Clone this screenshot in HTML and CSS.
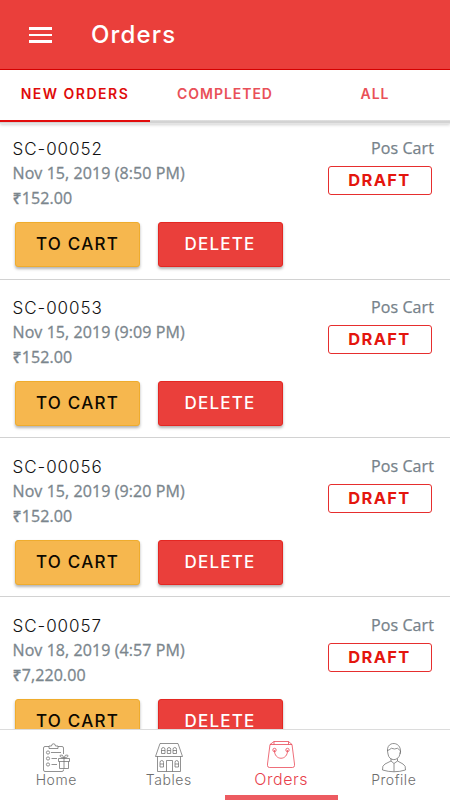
FILE: index.html
```html
<!DOCTYPE html>
<html lang="en">
<head>
<meta charset="utf-8">
<title>Orders</title>
<link rel="stylesheet" href="styles.css">
</head>
<body>
<div class="app">
  <header class="header">
    <div class="menu"><i></i><i></i><i></i></div>
    <h1 class="title">Orders</h1>
  </header>
  <nav class="tabs">
    <div class="tab active"><span>NEW ORDERS</span></div>
    <div class="tab"><span>COMPLETED</span></div>
    <div class="tab"><span>ALL</span></div>
  </nav>
  <main class="list">
    <article class="order">
      <div class="info">
        <div class="left"><div class="code">SC-00052</div><div class="meta">Nov 15, 2019 (8:50 PM)</div><div class="meta">₹152.00</div></div>
        <div class="right"><div class="source">Pos Cart</div><div class="badge">DRAFT</div></div>
      </div>
      <div class="actions"><button class="btn cart">TO CART</button><button class="btn delete">DELETE</button></div>
    </article>
    <article class="order">
      <div class="info">
        <div class="left"><div class="code">SC-00053</div><div class="meta">Nov 15, 2019 (9:09 PM)</div><div class="meta">₹152.00</div></div>
        <div class="right"><div class="source">Pos Cart</div><div class="badge">DRAFT</div></div>
      </div>
      <div class="actions"><button class="btn cart">TO CART</button><button class="btn delete">DELETE</button></div>
    </article>
    <article class="order">
      <div class="info">
        <div class="left"><div class="code">SC-00056</div><div class="meta">Nov 15, 2019 (9:20 PM)</div><div class="meta">₹152.00</div></div>
        <div class="right"><div class="source">Pos Cart</div><div class="badge">DRAFT</div></div>
      </div>
      <div class="actions"><button class="btn cart">TO CART</button><button class="btn delete">DELETE</button></div>
    </article>
    <article class="order">
      <div class="info">
        <div class="left"><div class="code">SC-00057</div><div class="meta">Nov 18, 2019 (4:57 PM)</div><div class="meta">₹7,220.00</div></div>
        <div class="right"><div class="source">Pos Cart</div><div class="badge">DRAFT</div></div>
      </div>
      <div class="actions"><button class="btn cart">TO CART</button><button class="btn delete">DELETE</button></div>
    </article>
  </main>
  <footer class="bottom">
    <div class="item">
      <svg width="28" height="30" viewBox="0 0 28 30"><path d="M7 3.500H3Q1.500 3.500 1.500 5V27Q1.500 28.500 3 28.500H20Q21.500 28.500 21.500 27V26.500M16 3.500H20Q21.500 3.500 21.500 5V11M7 5.500V3H9.500Q9.500.8 11.500.8T13.500 3H16V5.500ZM9 9.500H19M9.500 15.500H15M9.500 21.500H15M16.500 15.500H27.500V18.500H16.500ZM17.500 18.500V25.500H26.500V18.500M22 15.500V25.500M22 15Q16.500 14 18.500 12Q20.500 11 22 15Q23 11 25.500 12Q27.500 14 22 15"/><circle cx="6" cy="9.500" r="1.600"/><circle cx="6" cy="15.500" r="1.600"/><circle cx="6" cy="21.500" r="1.600"/></svg>
      <span>Home</span>
    </div>
    <div class="item">
      <svg width="28" height="30" viewBox="0 0 28 30"><path d="M5 .5H23L27.500 13.500H.5ZM2.500 13.500V28.500H25.500V13.500M11.500 28.500V17.500H17.500V28.500M6.500 10.500V6.500Q6.500 4.500 8.300 4.500T10 6.500V10.500ZM12.300 10.500V6.500Q12.300 4.500 14 4.500T15.700 6.500V10.500ZM18 10.500V6.500Q18 4.500 19.800 4.500T21.500 6.500V10.500ZM6.500 7.500H10M12.300 7.500H15.700M18 7.500H21.500M5 24V19.500Q5 17.500 6.800 17.500T8.500 19.500V24ZM20 24V19.500Q20 17.500 21.700 17.500T23.500 19.500V24ZM5 21H8.500M20 21H23.500"/></svg>
      <span>Tables</span>
    </div>
    <div class="item current">
      <svg width="28" height="30" viewBox="0 0 28 30"><path d="M3 4.500H25L27.500 24V25.500Q27.500 27.500 25.500 27.500H2.500Q.5 27.500.5 25.500V24ZM3 4.500L7 1.500H21.500L25 4.500M7 1.500V4.500M21.500 1.500V4.500M7.500 10C7 21 21 21 20.500 10"/><circle cx="7.500" cy="10" r="1.700"/><circle cx="20.500" cy="10" r="1.700"/></svg>
      <span>Orders</span>
    </div>
    <div class="item">
      <svg width="28" height="30" viewBox="0 0 28 30"><path d="M7.500 8C6.500-2 20.500-2 20.500 8L20 11C18.500 18.500 9 18.500 8 11ZM7.500 8Q7 7 9 7Q11 4 14.500 6Q18 4 19.500 7Q21.500 7 20 11M11 15.500V18L5 21Q2 22.500 2.500 27Q14 30.500 25.500 27Q26 22.500 23 21L17.500 18V15.500M11 18L14 20.500L17.500 18M14 20.500V28.500"/></svg>
      <span>Profile</span>
    </div>
  </footer>
</div>
</body>
</html>
```

FILE: styles.css
```css
* { box-sizing: border-box; }
body { margin: 0; background: #fff; font-family: Inter, "Liberation Sans", sans-serif; }
.app { width: 450px; height: 800px; display: flex; flex-direction: column; overflow: hidden; }
.header { height: 70px; flex: none; background: #ea3f3b; border-bottom: 1px solid #dc0000; display: flex; align-items: center; padding-left: 28px; gap: 39px; }
.menu { width: 24px; display: flex; flex-direction: column; gap: 4px; padding: 1px 0 0 1px; }
.menu i { height: 2.700px; background: #fff; }
.title { margin: 0; color: #fff; font-size: 24px; line-height: 30px; font-weight: 500; letter-spacing: 1.150px; }
.tabs { height: 54px; flex: none; display: flex; align-items: flex-start; position: relative; z-index: 1; background: linear-gradient(#fff 50px, #e8e8e8 50px, #d3d3d3 51px, #d3d3d3 53px, #e4e4e4 53px); box-shadow: 0 1px 3px rgba(0,0,0,.18); }
.tab { width: 150px; height: 52px; padding-top: 13px; text-align: center; color: #e95058; font-size: 14px; line-height: 21px; font-weight: 600; letter-spacing: 0.950px; }
.tab.active { color: #df0b0b; border-bottom: 2px solid #e20c0c; letter-spacing: 1.500px; }
.list { flex: 1; min-height: 0; overflow: hidden; margin-top: -4px; }
.order { height: 158.800px; border-bottom: 1px solid #d2d2d2; padding-top: 15.800px; }
.order:first-child { height: 159.600px; padding-top: 16.300px; }
.info { display: flex; justify-content: space-between; padding: 0 16px 0 12.500px; height: 86px; }
.code { color: #111; font-size: 17px; font-weight: 300; line-height: 24px; height: 25px; letter-spacing: 0.950px; padding-top: 1px; }
.meta { color: #7b868d; font-family: "Open Sans", "Noto Sans", sans-serif; font-size: 16px; line-height: 25px; font-weight: 500; letter-spacing: 0.080px; -webkit-text-stroke: .3px currentColor; }
.right { text-align: right; display: flex; flex-direction: column; align-items: flex-end; }
.source { color: #76828a; font-family: "Open Sans", "Noto Sans", sans-serif; font-size: 16px; line-height: 24px; font-weight: 500; letter-spacing: .1px; -webkit-text-stroke: .25px currentColor; }
.badge { width: 104px; height: 29px; margin: 6px 2.500px 0 0; border: 1.500px solid #e62e2e; border-radius: 3px; color: #e4150e; text-align: center; font-size: 16.500px; line-height: 26px; font-weight: 700; letter-spacing: 1.300px; }
.actions { display: flex; gap: 17.500px; padding-left: 15px; }
.btn { width: 125px; height: 45px; border: 1px solid #efac2d; border-radius: 3px; background: #f6b74e; color: #0d0900; font-family: inherit; font-size: 17px; font-weight: 500; letter-spacing: 1.250px; padding: 0 0 1px; box-shadow: 0 2px 3px rgba(0,0,0,.3); }
.btn.delete { background: #ea3f3b; border-color: #e42722; color: #fff; font-weight: 500; }
.bottom { height: 71px; flex: none; display: flex; border-top: 1px solid #dcdcdc; background: #fff; position: relative; z-index: 1; }
.item { width: 112.500px; height: 70px; display: flex; flex-direction: column; align-items: center; color: #6d6d6d; padding-top: 13px; font-size: 14px; line-height: 18px; font-weight: 300; letter-spacing: 0.550px; }
.item svg { display: block; fill: none; stroke: currentColor; stroke-width: .75; flex: none; }
.item span { margin-top: -2px; }
.item.current { color: #e83f4d; border-bottom: 5px solid #ed5b61; padding-top: 10px; font-size: 16px; font-weight: 300; }
.item.current span { margin-top: 0; }
```
